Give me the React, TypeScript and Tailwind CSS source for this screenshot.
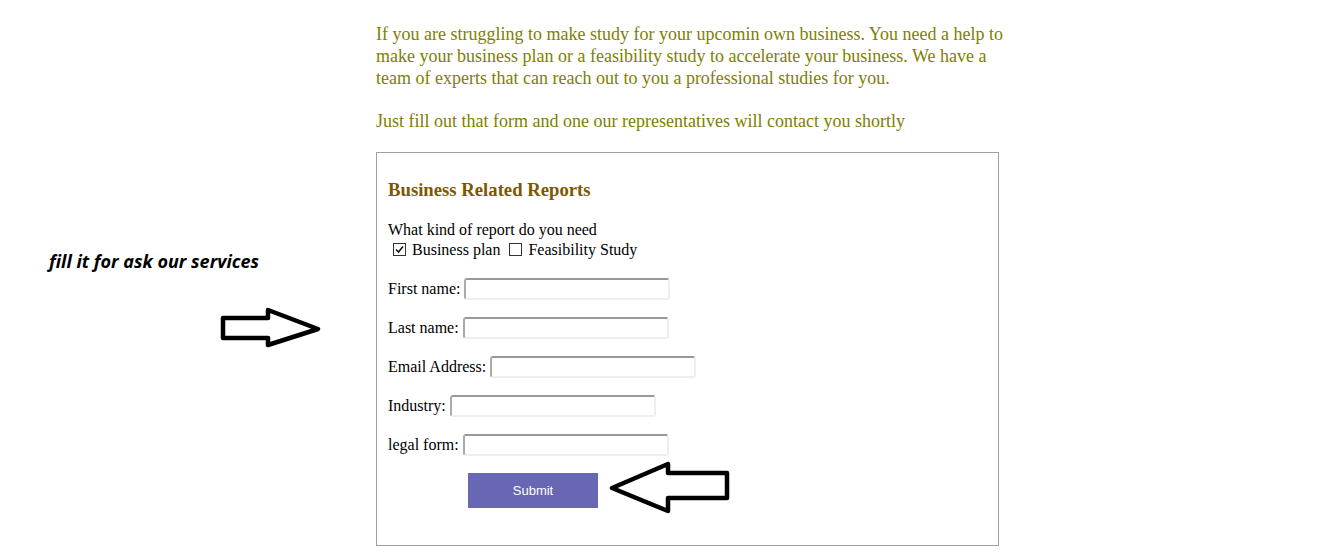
import { useState } from 'react';

const fields = [
  { id: 'first', label: 'First name:' },
  { id: 'last', label: 'Last name:' },
  { id: 'email', label: 'Email Address:' },
  { id: 'industry', label: 'Industry:' },
  { id: 'legal', label: 'legal form:' },
];

function RightArrow() {
  return (
    <svg width="104" height="44" viewBox="0 0 104 44" fill="none">
      <polygon
        points="4,12 49,12 49,4 99,23 49,39 49,32 4,32"
        stroke="#000"
        strokeWidth="4.5"
        strokeLinejoin="round"
      />
    </svg>
  );
}

function LeftArrow() {
  return (
    <svg width="124" height="57" viewBox="0 0 124 57" fill="none">
      <polygon
        points="4,29 60,5 60,14 119,14 119,39 60,39 60,52"
        stroke="#000"
        strokeWidth="4.5"
        strokeLinejoin="round"
      />
    </svg>
  );
}

function Box({ checked, onClick }: { checked: boolean; onClick: () => void }) {
  return (
    <span
      role="checkbox"
      aria-checked={checked}
      onClick={onClick}
      className="flex h-[13px] w-[13px] items-center justify-center border border-[#333] bg-white"
    >
      {checked && (
        <svg width="9" height="9" viewBox="0 0 9 9" fill="none">
          <path d="M1 4.5 L3.5 7 L8 1.5" stroke="#111" strokeWidth="1.6" />
        </svg>
      )}
    </span>
  );
}

export default function App() {
  const [plan, setPlan] = useState(true);
  const [feasibility, setFeasibility] = useState(false);

  return (
    <div className="flex min-h-[560px] bg-white font-['Liberation_Serif',serif]">
      {/* LEFT HINT */}
      <div className="w-[376px] shrink-0 pt-[249px] pl-[49px]">
        <p className="font-['Open_Sans',sans-serif] text-[18px] font-bold italic leading-[24px] text-black">
          fill it for ask our services
        </p>
        <div className="ml-[170px] mt-[33px]">
          <RightArrow />
        </div>
      </div>

      {/* MAIN COLUMN */}
      <div className="w-[632px] shrink-0 pt-[24px]">
        <p className="text-[18px] leading-[21.75px] text-[#808000]">
          If you are struggling to make study for your upcomin own business. You need a help to make your business plan or a feasibility study to accelerate your business. We have a team of experts that can reach out to you a professional studies for you.
          <br />
          <br />
          Just fill out that form and one our representatives will contact you shortly
        </p>

        <form
          className="mt-[19px] w-[623px] h-[394px] border border-[#a0a0a0] pl-[11px] pt-[26px]"
          onSubmit={(e) => e.preventDefault()}
        >
          <h3 className="text-[18.72px] font-bold leading-[22px] text-[#7d5800]">
            Business Related Reports
          </h3>

          <p className="mt-[20px] text-[16px] leading-[18px] text-black">What kind of report do you need</p>
          <div className="mt-[2px] flex items-center text-[16px] leading-[18px] text-black">
            <span className="ml-[5px] mr-[6px]">
              <Box checked={plan} onClick={() => setPlan(!plan)} />
            </span>
            <span>Business plan</span>
            <span className="ml-[9px] mr-[6px]">
              <Box checked={feasibility} onClick={() => setFeasibility(!feasibility)} />
            </span>
            <span>Feasibility Study</span>
          </div>

          <div className="mt-[19px] flex flex-col gap-[17px]">
            {fields.map((f) => (
              <label key={f.id} className="flex h-[22px] items-center text-[16px] text-black">
                <span className="mr-[4px]">{f.label}</span>
                <input
                  type="text"
                  className="h-[22px] w-[206px] rounded-[3px] border-2 border-t-[#999] border-l-[#aaa] border-b-[#eee] border-r-[#eee] bg-white outline-none"
                />
              </label>
            ))}
          </div>

          <div className="mt-[3px] flex items-center">
            <button
              type="submit"
              className="ml-[80px] mt-[7px] h-[35px] w-[130px] bg-[#6767b3] font-['Liberation_Sans',sans-serif] text-[13px] text-white"
            >
              Submit
            </button>
            <div className="ml-[10px]">
              <LeftArrow />
            </div>
          </div>
        </form>
      </div>
    </div>
  );
}
